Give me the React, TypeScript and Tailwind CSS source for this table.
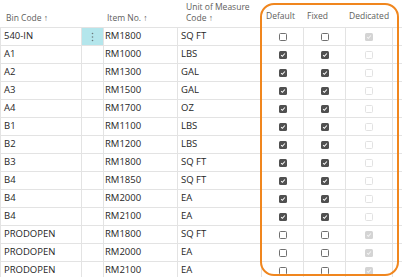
import React from "react";

type Row = { bin: string; item: string; uom: string; def: boolean; fixed: boolean; ded: boolean };

const rows: Row[] = [
  { bin: "540-IN", item: "RM1800", uom: "SQ FT", def: false, fixed: false, ded: true },
  { bin: "A1", item: "RM1000", uom: "LBS", def: true, fixed: true, ded: false },
  { bin: "A2", item: "RM1300", uom: "GAL", def: true, fixed: true, ded: false },
  { bin: "A3", item: "RM1500", uom: "GAL", def: true, fixed: true, ded: false },
  { bin: "A4", item: "RM1700", uom: "OZ", def: true, fixed: true, ded: false },
  { bin: "B1", item: "RM1100", uom: "LBS", def: true, fixed: true, ded: false },
  { bin: "B2", item: "RM1200", uom: "LBS", def: true, fixed: true, ded: false },
  { bin: "B3", item: "RM1800", uom: "SQ FT", def: true, fixed: true, ded: false },
  { bin: "B4", item: "RM1850", uom: "SQ FT", def: true, fixed: true, ded: false },
  { bin: "B4", item: "RM2000", uom: "EA", def: true, fixed: true, ded: false },
  { bin: "B4", item: "RM2100", uom: "EA", def: true, fixed: true, ded: false },
  { bin: "PRODOPEN", item: "RM1800", uom: "SQ FT", def: false, fixed: false, ded: true },
  { bin: "PRODOPEN", item: "RM2000", uom: "EA", def: false, fixed: false, ded: true },
  { bin: "PRODOPEN", item: "RM2100", uom: "EA", def: false, fixed: false, ded: true },
];

function Check({ checked, disabled }: { checked: boolean; disabled?: boolean }) {
  if (disabled) {
    return checked ? (
      <div className="w-[8px] h-[8px] rounded-[1.5px] bg-[#d4d4d4] flex items-center justify-center">
        <svg width="6" height="6" viewBox="0 0 8 8">
          <path d="M1.5 4.2 L3.2 5.8 L6.5 2" stroke="#f4f4f4" strokeWidth="1.4" fill="none" />
        </svg>
      </div>
    ) : (
      <div className="w-[8px] h-[8px] rounded-[1.5px] border border-[#e2e2e2] bg-white" />
    );
  }
  return checked ? (
    <div className="w-[8px] h-[8px] rounded-[1.5px] bg-[#505050] flex items-center justify-center">
      <svg width="6" height="6" viewBox="0 0 8 8">
        <path d="M1.5 4.2 L3.2 5.8 L6.5 2" stroke="#ffffff" strokeWidth="1.4" fill="none" />
      </svg>
    </div>
  ) : (
    <div className="w-[8px] h-[8px] rounded-[1.5px] border border-[#707070] bg-white" />
  );
}

const cols = "grid grid-cols-[81px_22px_74px_84px_42px_42px_48px_1fr]";

export default function App() {
  return (
    <div
      className="relative w-[402px] h-[277px] overflow-hidden bg-white text-[#262626]"
      style={{ fontFamily: '"Open Sans", "Liberation Sans", sans-serif' }}
    >
      <div className={`${cols} h-[28px] border-b border-[#e3e3e3] text-[8.5px] leading-[11px] text-[#605e5c]`}>
        <div className="flex items-end pl-[6px] pb-[4px]">Bin Code ↑</div>
        <div />
        <div className="flex items-end pl-[4px] pb-[4px]">Item No. ↑</div>
        <div className="flex flex-col justify-end pl-[9px] pb-[4px]">
          <span>Unit of Measure</span>
          <span>Code ↑</span>
        </div>
        <div className="flex items-end pl-[5px] pb-[6px]">Default</div>
        <div className="flex items-end pl-[4px] pb-[6px]">Fixed</div>
        <div className="flex items-end pl-[4px] pb-[6px]">Dedicated</div>
        <div />
      </div>
      {rows.map((r, i) => (
        <div key={i} className={`${cols} h-[18px] border-b border-[#e3e3e3] text-[9.5px]`}>
          <div className="flex items-center pl-[3px] border-l border-[#e3e3e3]">{r.bin}</div>
          <div
            className={`flex items-center justify-center border-l border-[#e3e3e3] ${i === 0 ? "bg-[#b4e6ec]" : ""}`}
          >
            {i === 0 && (
              <svg width="3" height="10" viewBox="0 0 3 10">
                <circle cx="1.5" cy="1.5" r="0.8" fill="#6b7b7d" />
                <circle cx="1.5" cy="5" r="0.8" fill="#6b7b7d" />
                <circle cx="1.5" cy="8.5" r="0.8" fill="#6b7b7d" />
              </svg>
            )}
          </div>
          <div className="flex items-center pl-[1px] border-l border-[#e3e3e3]">{r.item}</div>
          <div className="flex items-center pl-[3px] border-l border-[#e3e3e3]">{r.uom}</div>
          <div className="flex items-center justify-center border-l border-[#e3e3e3]">
            <Check checked={r.def} />
          </div>
          <div className="flex items-center justify-center border-l border-[#e3e3e3]">
            <Check checked={r.fixed} />
          </div>
          <div className="flex items-center justify-center border-l border-r border-[#e3e3e3]">
            <Check checked={r.ded} disabled />
          </div>
          <div />
        </div>
      ))}
      <div className="absolute left-[260px] top-[3px] w-[139px] h-[273px] border-2 border-[#f0861e] rounded-[14px] pointer-events-none" />
    </div>
  );
}
